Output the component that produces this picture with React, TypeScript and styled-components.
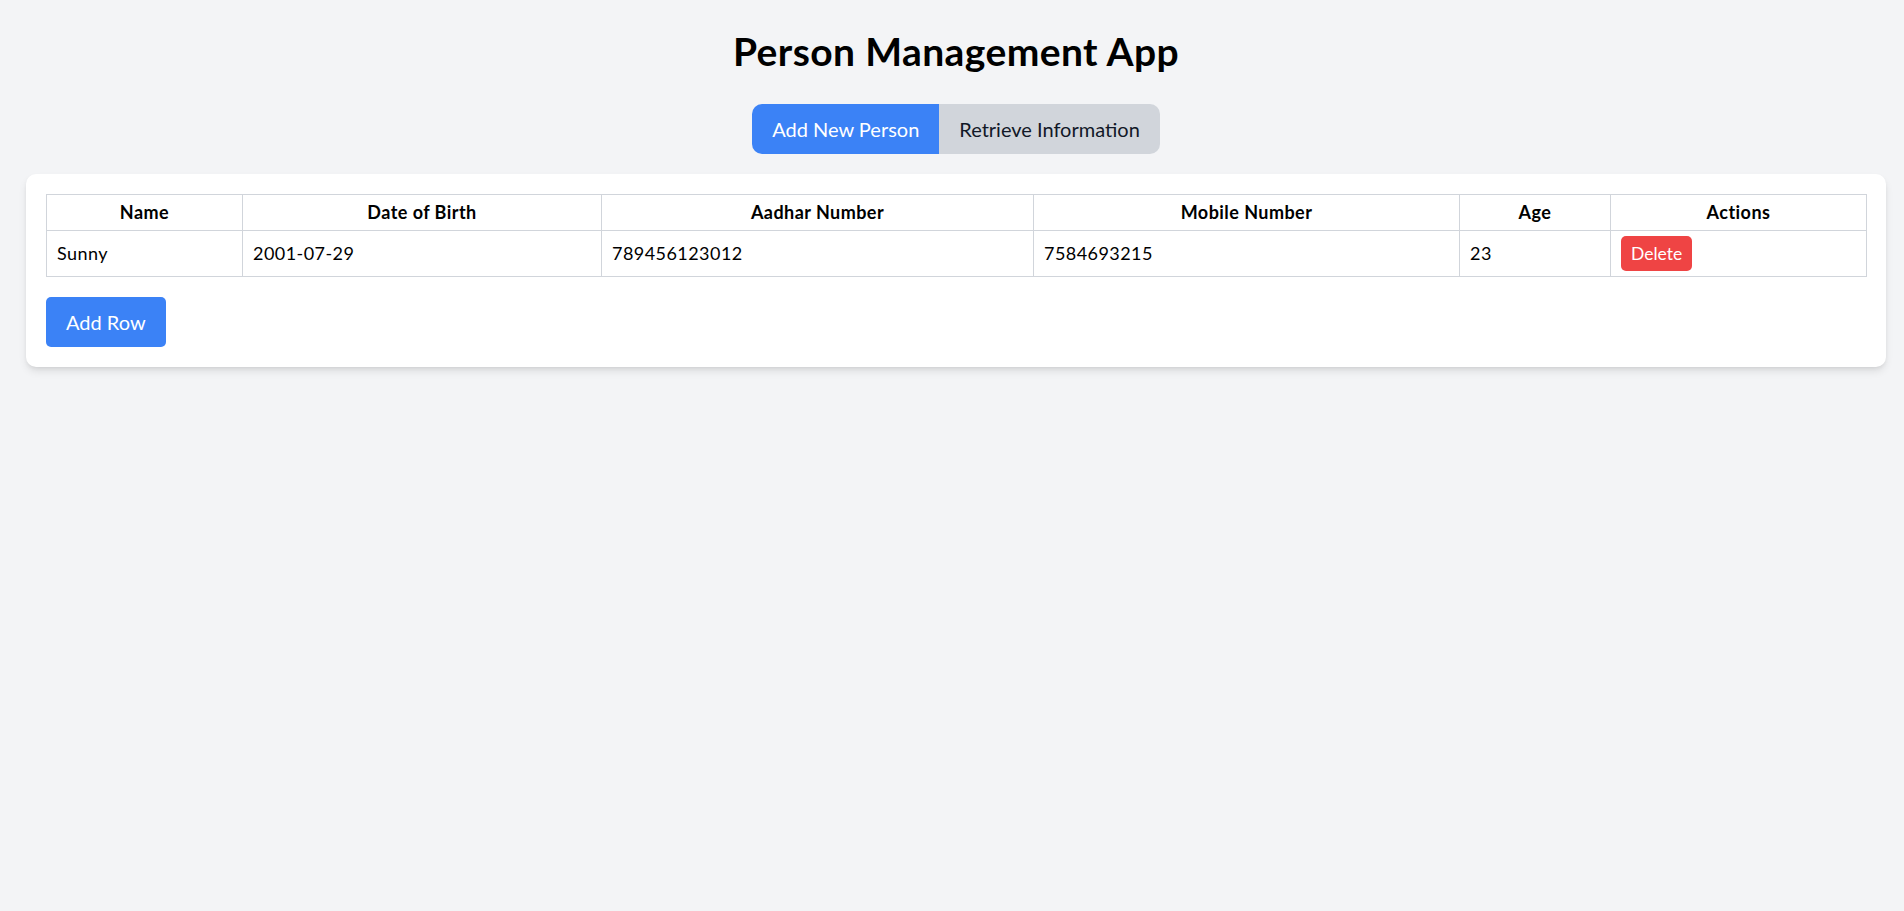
import React, { useState } from "react";
import styled, { createGlobalStyle } from "styled-components";

const GlobalStyle = createGlobalStyle`
  html, body {
    margin: 0;
    padding: 0;
    background: #f3f4f6;
  }
  body {
    font-family: "Segoe UI", Lato, "Open Sans", sans-serif;
    color: #000;
  }
  * { box-sizing: border-box; }
`;

const Page = styled.div`
  padding: 29px 18px 20px 26px;
  display: flex;
  flex-direction: column;
  align-items: stretch;
`;

const Title = styled.h1`
  margin: 0 0 30px;
  text-align: center;
  font-size: 39px;
  letter-spacing: 0.4px;
  line-height: 45px;
  font-weight: 700;
`;

const Tabs = styled.div`
  display: flex;
  justify-content: center;
  margin-bottom: 20px;
`;

const Tab = styled.button<{ $active: boolean; $pos: "left" | "right" }>`
  height: 50px;
  padding: 0 20px;
  border: none;
  font-family: inherit;
  font-size: 20px;
  line-height: 30px;
  cursor: pointer;
  background: ${(p) => (p.$active ? "#3b82f6" : "#d1d5db")};
  color: ${(p) => (p.$active ? "#ffffff" : "#111827")};
  border-radius: ${(p) => (p.$pos === "left" ? "10px 0 0 10px" : "0 10px 10px 0")};
`;

const Card = styled.div`
  background: #ffffff;
  border-radius: 10px;
  padding: 20px;
  box-shadow: 0 5px 8px -1px rgba(0, 0, 0, 0.1), 0 2px 5px -2px rgba(0, 0, 0, 0.1);
`;

const Table = styled.table`
  width: 100%;
  table-layout: fixed;
  border-collapse: collapse;
  border: 1px solid #d1d5db;
  font-size: 18px;
  letter-spacing: 0.45px;
`;

const Th = styled.th`
  border: 1px solid #d1d5db;
  padding: 5px 10px;
  height: 36px;
  line-height: 25px;
  font-weight: 700;
  text-align: center;
`;

const Td = styled.td`
  border: 1px solid #d1d5db;
  padding: 5px 10px;
  height: 45px;
  line-height: 25px;
  text-align: left;
  vertical-align: middle;
`;

const DeleteButton = styled.button`
  display: block;
  border: none;
  background: #ef4444;
  color: #ffffff;
  font-family: inherit;
  font-size: 17.5px;
  letter-spacing: 0;
  line-height: 25px;
  padding: 5px 10px;
  border-radius: 5px;
  cursor: pointer;
`;

const AddRowButton = styled.button`
  align-self: flex-start;
  margin-top: 20px;
  height: 50px;
  padding: 0 20px;
  border: none;
  border-radius: 5px;
  background: #3b82f6;
  color: #ffffff;
  font-family: inherit;
  font-size: 20px;
  line-height: 30px;
  cursor: pointer;
`;

const CardBody = styled.div`
  display: flex;
  flex-direction: column;
`;

type Person = {
  name: string;
  dob: string;
  aadhar: string;
  mobile: string;
  age: string;
};

const columns = [
  { label: "Name", width: 196 },
  { label: "Date of Birth", width: 359 },
  { label: "Aadhar Number", width: 432 },
  { label: "Mobile Number", width: 426 },
  { label: "Age", width: 151 },
  { label: "Actions", width: 256 },
];

export default function App() {
  const [tab, setTab] = useState<"add" | "retrieve">("add");
  const [rows, setRows] = useState<Person[]>([
    { name: "Sunny", dob: "2001-07-29", aadhar: "789456123012", mobile: "7584693215", age: "23" },
  ]);

  return (
    <>
      <GlobalStyle />
      <Page>
        <Title>Person Management App</Title>
        <Tabs>
          <Tab $active={tab === "add"} $pos="left" onClick={() => setTab("add")}>
            Add New Person
          </Tab>
          <Tab $active={tab === "retrieve"} $pos="right" onClick={() => setTab("retrieve")}>
            Retrieve Information
          </Tab>
        </Tabs>
        <Card>
          <CardBody>
            <Table>
              <colgroup>
                {columns.map((c) => (
                  <col key={c.label} style={{ width: c.width }} />
                ))}
              </colgroup>
              <thead>
                <tr>
                  {columns.map((c) => (
                    <Th key={c.label}>{c.label}</Th>
                  ))}
                </tr>
              </thead>
              <tbody>
                {rows.map((r, i) => (
                  <tr key={i}>
                    <Td>{r.name}</Td>
                    <Td>{r.dob}</Td>
                    <Td>{r.aadhar}</Td>
                    <Td>{r.mobile}</Td>
                    <Td>{r.age}</Td>
                    <Td>
                      <DeleteButton onClick={() => setRows(rows.filter((_, j) => j !== i))}>
                        Delete
                      </DeleteButton>
                    </Td>
                  </tr>
                ))}
              </tbody>
            </Table>
            <AddRowButton
              onClick={() =>
                setRows([...rows, { name: "", dob: "", aadhar: "", mobile: "", age: "" }])
              }
            >
              Add Row
            </AddRowButton>
          </CardBody>
        </Card>
      </Page>
    </>
  );
}
